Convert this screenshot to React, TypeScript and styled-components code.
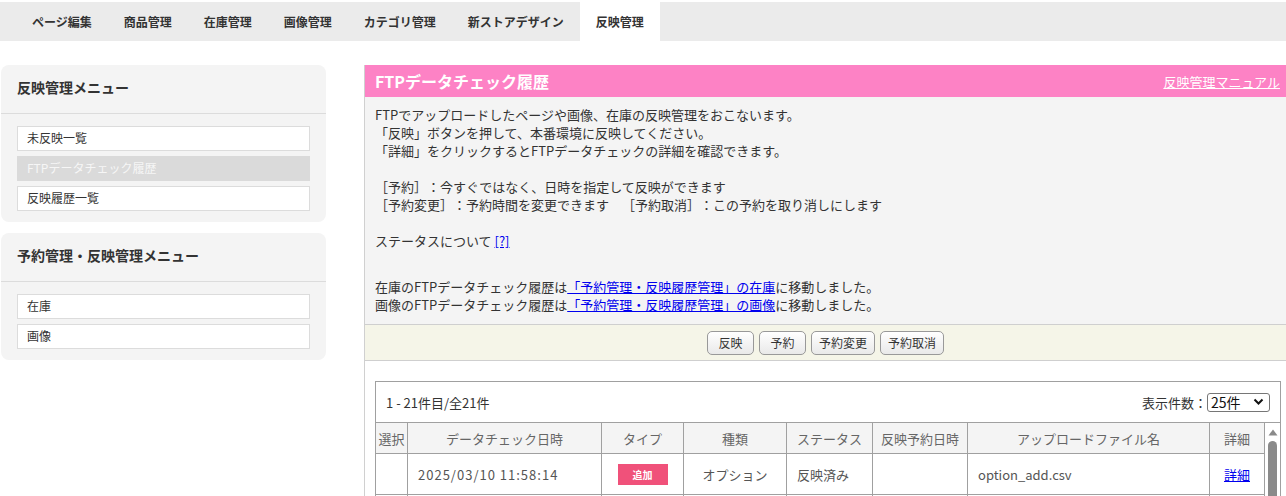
import React from "react";
import styled, { createGlobalStyle, css } from "styled-components";

const GlobalStyle = createGlobalStyle`
  html, body {
    margin: 0;
    padding: 0;
    overflow: hidden;
    background: #fff;
  }
  body {
    font-family: "Noto Sans CJK JP", "Noto Sans", sans-serif;
    color: #333;
    font-size: 13px;
    text-spacing-trim: space-all;
  }
  a {
    color: #0000ee;
  }
`;

const tabs = [
  "ページ編集",
  "商品管理",
  "在庫管理",
  "画像管理",
  "カテゴリ管理",
  "新ストアデザイン",
  "反映管理",
];

const columns = [
  { label: "選択", width: 32 },
  { label: "データチェック日時", width: 194 },
  { label: "タイプ", width: 82 },
  { label: "種類", width: 103 },
  { label: "ステータス", width: 86 },
  { label: "反映予約日時", width: 95 },
  { label: "アップロードファイル名", width: 242 },
  { label: "詳細", width: 55 },
];

const rows = [
  { date: "2025/03/10 11:58:14", type: "追加", kind: "オプション", status: "反映済み", file: "option_add.csv" },
];

const App: React.FC = () => {
  return (
    <>
      <GlobalStyle />
      <Nav>
        {tabs.map((t) => (
          <Tab key={t} active={t === "反映管理"}>
            {t}
          </Tab>
        ))}
      </Nav>
      <Layout>
        <Sidebar>
          <MenuPanel>
            <MenuTitle>反映管理メニュー</MenuTitle>
            <MenuList>
              <MenuItem>未反映一覧</MenuItem>
              <MenuItem active>FTPデータチェック履歴</MenuItem>
              <MenuItem>反映履歴一覧</MenuItem>
            </MenuList>
          </MenuPanel>
          <MenuPanel>
            <MenuTitle>予約管理・反映管理メニュー</MenuTitle>
            <MenuList>
              <MenuItem>在庫</MenuItem>
              <MenuItem>画像</MenuItem>
            </MenuList>
          </MenuPanel>
        </Sidebar>

        <Main>
          <PanelHead>
            <PanelTitle>FTPデータチェック履歴</PanelTitle>
            <ManualLink href="#">反映管理マニュアル</ManualLink>
          </PanelHead>

          <Intro>
            <Para>
              FTPでアップロードしたページや画像、在庫の反映管理をおこないます。
              <br />
              「反映」ボタンを押して、本番環境に反映してください。
              <br />
              「詳細」をクリックするとFTPデータチェックの詳細を確認できます。
            </Para>
            <Para>
              ［予約］：今すぐではなく、日時を指定して反映ができます
              <br />
              ［予約変更］：予約時間を変更できます　［予約取消］：この予約を取り消しにします
            </Para>
            <Para gap={28}>
              ステータスについて <a href="#">[?]</a>
            </Para>
            <Para gap={0}>
              在庫のFTPデータチェック履歴は<a href="#">「予約管理・反映履歴管理」の在庫</a>に移動しました。
              <br />
              画像のFTPデータチェック履歴は<a href="#">「予約管理・反映履歴管理」の画像</a>に移動しました。
            </Para>
          </Intro>

          <ActionBar>
            <ActionButton>反映</ActionButton>
            <ActionButton>予約</ActionButton>
            <ActionButton>予約変更</ActionButton>
            <ActionButton>予約取消</ActionButton>
          </ActionBar>

          <ListArea>
            <ListBox>
              <ListInfo>
                <span>1 - 21件目/全21件</span>
                <PerPage>
                  表示件数：
                  <FakeSelect>
                    25件
                    <svg width="11" height="8" viewBox="0 0 11 8">
                      <path d="M1.5 1.5 L5.5 5.5 L9.5 1.5" fill="none" stroke="#111" strokeWidth="2" />
                    </svg>
                  </FakeSelect>
                </PerPage>
              </ListInfo>
              <TableWrap>
                <Table>
                  <colgroup>
                    {columns.map((c) => (
                      <col key={c.label} style={{ width: c.width }} />
                    ))}
                  </colgroup>
                  <thead>
                    <tr>
                      {columns.map((c) => (
                        <Th key={c.label}>{c.label}</Th>
                      ))}
                    </tr>
                  </thead>
                  <tbody>
                    {rows.map((r, i) => (
                      <tr key={i}>
                        <Td />
                        <Td>
                          <DateText>{r.date}</DateText>
                        </Td>
                        <Td align="center">
                          <Badge>{r.type}</Badge>
                        </Td>
                        <Td align="center">{r.kind}</Td>
                        <Td>{r.status}</Td>
                        <Td />
                        <Td>{r.file}</Td>
                        <Td align="center">
                          <a href="#">詳細</a>
                        </Td>
                      </tr>
                    ))}
                    <tr>
                      {columns.map((c) => (
                        <Td key={c.label} />
                      ))}
                    </tr>
                  </tbody>
                </Table>
                <Scrollbar>
                  <svg width="10" height="7" viewBox="0 0 10 7">
                    <path d="M5 0.5 L9.5 6.5 L0.5 6.5 Z" fill="#8a8a8a" />
                  </svg>
                  <Thumb />
                </Scrollbar>
              </TableWrap>
            </ListBox>
          </ListArea>
        </Main>
      </Layout>
    </>
  );
};

export default App;

const Nav = styled.nav`
  margin-top: 2px;
  height: 39px;
  background: #ebebeb;
  display: flex;
  padding-left: 16px;
`;

const Tab = styled.div<{ active?: boolean }>`
  padding: 0 16px;
  line-height: 39px;
  font-size: 12px;
  font-weight: bold;
  color: #333;
  white-space: nowrap;
  ${(p) =>
    p.active &&
    css`
      background: #fff;
    `}
`;

const Layout = styled.div`
  display: flex;
  align-items: flex-start;
  padding: 24px 0 0 1px;
`;

const Sidebar = styled.aside`
  width: 325px;
  flex-shrink: 0;
  display: flex;
  flex-direction: column;
  gap: 11px;
`;

const MenuPanel = styled.section`
  background: #f4f4f4;
  border-radius: 8px;
`;

const MenuTitle = styled.div`
  height: 48px;
  line-height: 44px;
  padding-left: 16px;
  font-size: 14px;
  font-weight: bold;
  color: #333;
  border-bottom: 1px solid #dcdcdc;
`;

const MenuList = styled.div`
  padding: 12px 16px 11px;
  display: flex;
  flex-direction: column;
  gap: 5px;
`;

const MenuItem = styled.div<{ active?: boolean }>`
  height: 25px;
  box-sizing: border-box;
  line-height: 22px;
  padding-left: 9px;
  font-size: 12px;
  color: #333;
  background: #fff;
  border: 1px solid #dcdcdc;
  ${(p) =>
    p.active &&
    css`
      background: #dadada;
      border-color: #dadada;
      color: #f6f6f6;
    `}
`;

const Main = styled.main`
  flex: 1;
  margin-left: 38px;
  border-left: 1px solid #d0d0d0;
  min-width: 0;
`;

const PanelHead = styled.div`
  height: 32px;
  background: #fd82c5;
  display: flex;
  align-items: center;
  justify-content: space-between;
  padding: 0 6px 0 10px;
`;

const PanelTitle = styled.h2`
  margin: 0;
  font-size: 16px;
  font-weight: bold;
  color: #fff;
`;

const ManualLink = styled.a`
  && {
    color: #fff;
  }
  font-size: 13px;
  text-decoration: underline;
`;

const Intro = styled.div`
  background: #f4f4f4;
  padding: 9px 10px 10px;
  font-size: 13px;
  line-height: 18px;
  color: #333;
`;

const Para = styled.p<{ gap?: number }>`
  margin: 0 0 ${(p) => (p.gap ?? 18)}px;
`;

const ActionBar = styled.div`
  height: 35px;
  background: #f5f5e8;
  border-top: 1px solid #cfcfcf;
  border-bottom: 1px solid #cfcfcf;
  display: flex;
  align-items: center;
  justify-content: center;
  gap: 5px;
`;

const ActionButton = styled.button`
  height: 24px;
  min-width: 47px;
  padding: 0 7px;
  font-family: inherit;
  font-size: 12px;
  color: #333;
  border: 1px solid #999;
  border-radius: 5px;
  background: linear-gradient(#ffffff, #e9e9e9);
  cursor: pointer;
`;

const ListArea = styled.div`
  padding: 20px 5px 0 10px;
`;

const ListBox = styled.div`
  border: 1px solid #a0a0a0;
`;

const ListInfo = styled.div`
  height: 40px;
  display: flex;
  align-items: center;
  justify-content: space-between;
  padding: 0 10px;
  font-size: 13px;
  color: #333;
  border-bottom: 1px solid #a0a0a0;
`;

const PerPage = styled.div`
  display: flex;
  align-items: center;
  font-size: 13px;
  color: #333;
`;

const FakeSelect = styled.div`
  width: 63px;
  height: 19px;
  box-sizing: border-box;
  border: 1px solid #767676;
  border-radius: 3px;
  display: flex;
  align-items: center;
  justify-content: space-between;
  padding: 0 5px 0 3px;
  font-size: 14px;
  color: #111;
  background: #fff;
`;

const TableWrap = styled.div`
  display: flex;
  align-items: flex-start;
`;

const Table = styled.table`
  table-layout: fixed;
  width: 889px;
  border-collapse: separate;
  border-spacing: 0;
  font-size: 13px;
`;

const Th = styled.th`
  height: 30px;
  padding: 0;
  font-weight: normal;
  color: #666;
  background: #f4f4f4;
  border-right: 1px solid #a0a0a0;
  border-bottom: 1px solid #a0a0a0;
  text-align: center;
  white-space: nowrap;
`;

const Td = styled.td<{ align?: "left" | "center" }>`
  height: 40px;
  padding: 0 10px;
  color: #555;
  border-right: 1px solid #a0a0a0;
  border-bottom: 1px solid #a0a0a0;
  text-align: ${(p) => p.align ?? "left"};
  white-space: nowrap;
`;

const DateText = styled.span`
  letter-spacing: 1px;
`;

const Badge = styled.span`
  display: inline-block;
  width: 50px;
  height: 21px;
  line-height: 21px;
  background: #f0517a;
  color: #fff;
  font-size: 10px;
  font-weight: bold;
  text-align: center;
  vertical-align: middle;
`;

const Scrollbar = styled.div`
  width: 16px;
  display: flex;
  flex-direction: column;
  align-items: center;
  padding-top: 6px;
  gap: 5px;
`;

const Thumb = styled.div`
  width: 9px;
  height: 60px;
  border-radius: 5px;
  background: #8a8a8a;
`;
